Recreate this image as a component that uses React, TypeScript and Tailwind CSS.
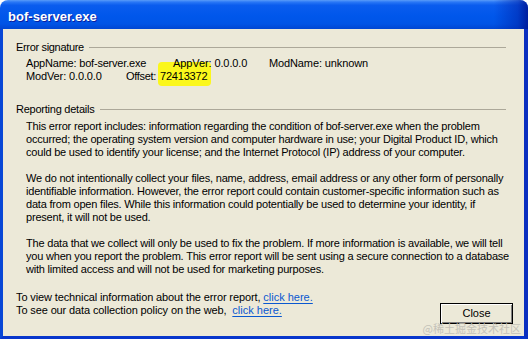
import React from "react";

const F = { fontFamily: '"Liberation Sans", Arial, sans-serif' };

const Line = ({ children }: { children: React.ReactNode }) => (
  <div className="h-[13px] leading-[13px] whitespace-nowrap">{children}</div>
);

export default function App() {
  return (
    <div className="w-[528px] h-[339px] bg-white overflow-hidden" style={F}>
      <div className="relative w-full h-full flex flex-col rounded-t-[8px] overflow-hidden">
        {/* title bar */}
        <div className="relative h-[29px] shrink-0 flex items-center pl-[8px] bg-[linear-gradient(to_bottom,#5a9cf8_0%,#2a78f6_7%,#0a5cee_18%,#0057eb_55%,#0054e6_82%,#0046d2_100%)]">
          <div className="absolute right-0 top-0 bottom-0 w-[34px] bg-[linear-gradient(to_right,rgba(0,40,180,0),rgba(0,36,170,0.55)_70%,rgba(0,24,150,0.9))]" />
          <span className="relative text-white font-bold text-[13px] leading-none tracking-[0.05px] mt-[3px] [text-shadow:1px_1px_0_#0a1e9e]">
            bof-server.exe
          </span>
        </div>
        {/* body with frame */}
        <div className="flex-1 flex border-l-[3px] border-r-[4px] border-b-[3px] border-l-[#0847d6] border-r-[#0a2fc0] border-b-[#0836cc]">
          <div className="relative isolate flex-1 bg-[#ECE9D8] text-[11px] text-black tracking-[-0.2px] pl-[13px] pr-[11px] pt-[12px] flex flex-col">
            <div className="flex items-center h-[13px] leading-[13px] mr-[7px]">
              <span className="tracking-[-0.33px]">Error signature</span>
              <div className="flex-1 h-px bg-[#aca899] ml-[5px]" />
            </div>
            <div className="pl-[10px] mt-[3px]">
              <Line>
                <span className="inline-block w-[147px]">AppName: bof-server.exe</span>
                <span className="inline-block w-[96px] tracking-[-0.1px]">AppVer: 0.0.0.0</span>
                <span className="tracking-[-0.12px]">ModName: unknown</span>
              </Line>
              <Line>
                <span className="inline-block w-[100px] tracking-[-0.13px]">ModVer: 0.0.0.0</span>
                <span className="inline-block w-[34px] tracking-[-0.3px]">Offset:</span>
                <span className="relative">
                  <span className="absolute left-[-2px] top-[-8px] w-[53px] h-[24px] bg-[#fbf71c] rounded-[4px] -z-10" />
                  72413372
                </span>
              </Line>
            </div>
            <div className="flex items-center h-[13px] leading-[13px] mt-[20px] mr-[7px]">
              <span className="tracking-[-0.24px]">Reporting details</span>
              <div className="flex-1 h-px bg-[#aca899] ml-[6px]" />
            </div>
            <div className="pl-[10px] mt-[4px]">
              <Line>This error report includes: information regarding the condition of bof-server.exe when the problem</Line>
              <Line>occurred; the operating system version and computer hardware in use; your Digital Product ID, which</Line>
              <Line>could be used to identify your license; and the Internet Protocol (IP) address of your computer.</Line>
              <div className="h-[13px]" />
              <Line>We do not intentionally collect your files, name, address, email address or any other form of personally</Line>
              <Line>identifiable information. However, the error report could contain customer-specific information such as</Line>
              <Line>data from open files. While this information could potentially be used to determine your identity, if</Line>
              <Line>present, it will not be used.</Line>
              <div className="h-[13px]" />
              <Line>The data that we collect will only be used to fix the problem. If more information is available, we will tell</Line>
              <Line>you when you report the problem. This error report will be sent using a secure connection to a database</Line>
              <Line>with limited access and will not be used for marketing purposes.</Line>
            </div>
            <div className="flex items-start justify-between mt-[15px] tracking-[-0.12px]">
              <div>
                <Line>
                  To view technical information about the error report,{" "}
                  <span className="text-[#0a58d0] underline underline-offset-[2px] tracking-normal">click here.</span>
                </Line>
                <Line>
                  To see our data collection policy on the web,&nbsp;{" "}
                  <span className="text-[#0a58d0] underline underline-offset-[2px] tracking-normal">click here.</span>
                </Line>
              </div>
              <button className="mt-[12px] w-[73px] h-[21px] border border-black bg-[#ECE9D8] text-[11px] tracking-normal shadow-[inset_1px_1px_0_#ffffff,inset_-1px_-1px_0_#808080] flex items-center justify-center">
                Close
              </button>
            </div>
            <div
              className="absolute right-[3px] bottom-[1px] text-[11px] leading-[13px] tracking-normal text-[#c4c2b8] whitespace-nowrap"
              style={{ fontFamily: '"Noto Sans CJK SC", sans-serif' }}
            >
              @稀土掘金技术社区
            </div>
          </div>
        </div>
      </div>
    </div>
  );
}
